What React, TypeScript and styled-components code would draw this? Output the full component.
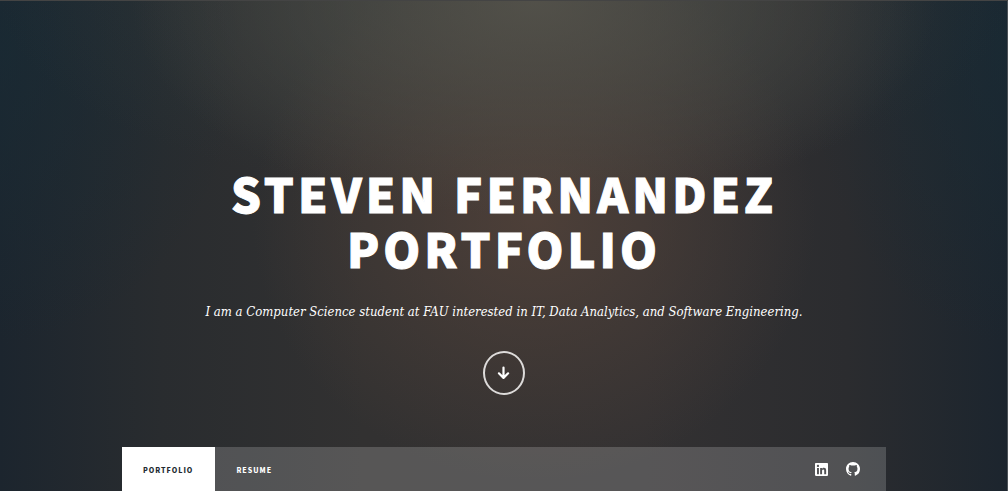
import React from "react";
import styled, { createGlobalStyle } from "styled-components";

const GlobalStyle = createGlobalStyle`
  *, *::before, *::after { box-sizing: border-box; }
  body { margin: 0; background: #1e252d; }
`;

const Page = styled.div`
  min-height: 100vh;
  display: flex;
  flex-direction: column;
  overflow: hidden;
  color: #fff;
  font-family: "Noto Sans CJK JP", "Open Sans", sans-serif;
  border-top: 1px solid #444444;
  box-shadow: inset -1px 0 0 #4c5257;
  background:
    radial-gradient(ellipse 40% 44% at 53% 0%, rgba(86, 84, 76, 0.85), rgba(86, 84, 76, 0) 100%),
    radial-gradient(ellipse 28% 54% at 53% 44%, rgba(84, 67, 58, 0.8), rgba(84, 67, 58, 0) 100%),
    radial-gradient(ellipse 50% 40% at 50% 0%, rgba(52, 62, 62, 0.6), rgba(52, 62, 62, 0) 100%),
    radial-gradient(ellipse 24% 60% at 0% 10%, rgba(24, 44, 54, 0.6), rgba(24, 44, 54, 0) 100%),
    radial-gradient(ellipse 20% 60% at 100% 10%, rgba(24, 44, 54, 0.6), rgba(24, 44, 54, 0) 100%),
    linear-gradient(90deg, #1c252e 0%, #292c2f 16%, #323131 36%, #333132 64%, #2b2c2f 84%, #1c252e 100%);
`;

const Intro = styled.header`
  flex: 1;
  display: flex;
  flex-direction: column;
  align-items: center;
  padding: 164px 24px 52px;
  text-align: center;
`;

const Title = styled.h1`
  margin: 0;
  font-size: 47px;
  line-height: 55px;
  font-weight: 900;
  letter-spacing: 4px;
  text-transform: uppercase;
  -webkit-text-stroke: 1px #fff;
`;

const Tagline = styled.p`
  margin: 23px 0 25px;
  font-family: "DejaVu Serif Condensed", "DejaVu Serif", serif;
  font-style: italic;
  font-size: 13px;
  line-height: 28px;
`;

const ScrollLink = styled.a`
  display: flex;
  align-items: center;
  justify-content: center;
  width: 42px;
  height: 44px;
  border: 2px solid #dddbda;
  border-radius: 50%;
  color: #fff;
`;

const Bar = styled.nav`
  display: flex;
  justify-content: space-between;
  min-height: 44px;
  margin: 0 122px;
  padding-right: 26px;
  background: rgba(255, 255, 255, 0.18);
`;

const Group = styled.div<{ $gap?: number }>`
  display: flex;
  align-items: center;
  gap: ${({ $gap = 0 }) => $gap}px;
`;

const Tab = styled.a<{ $active?: boolean }>`
  display: flex;
  align-items: center;
  align-self: stretch;
  padding: 2px 22px 0 21px;
  font-size: 7px;
  line-height: 12px;
  font-weight: 900;
  letter-spacing: 1px;
  text-transform: uppercase;
  text-decoration: none;
  color: ${({ $active }) => ($active ? "#212931" : "#fff")};
  background: ${({ $active }) => ($active ? "#fff" : "transparent")};
`;

const SocialLink = styled.a`
  display: flex;
  color: #fff;
`;

const ArrowDown = () => (
  <svg width="14" height="14" viewBox="0 0 14 14" fill="none" stroke="currentColor" strokeWidth="2.2" strokeLinecap="round" strokeLinejoin="round" aria-hidden="true">
    <path d="M6.500 1.500V11.800M1.900 7.300 6.500 11.900 11.100 7.300" />
  </svg>
);

const LinkedIn = () => (
  <svg width="13" height="13" viewBox="0 0 448 448" fill="currentColor" aria-hidden="true">
    <path d="M416 0H31.900C14.300 0 0 14.500 0 32.300v383.400C0 433.500 14.300 448 31.900 448H416c17.600 0 32-14.500 32-32.300V32.300C448 14.500 433.600 0 416 0zM135.400 384H69V170.200h66.500V384zM102.200 141c-21.300 0-38.500-17.300-38.500-38.500S80.900 64 102.200 64c21.200 0 38.500 17.300 38.500 38.500S123.500 141 102.200 141zM384.300 384h-66.400V280c0-24.800-.5-56.700-34.500-56.700-34.600 0-39.900 27-39.900 54.900V384h-66.400V170.200h63.700v29.200h.9c8.900-16.800 30.600-34.500 62.900-34.500 67.200 0 79.700 44.300 79.700 101.900V384z" />
  </svg>
);

const GitHub = () => (
  <svg width="14" height="14" viewBox="0 0 16 16" fill="currentColor" aria-hidden="true">
    <path d="M8 0C3.580 0 0 3.580 0 8c0 3.540 2.290 6.530 5.470 7.590.4.070.55-.17.55-.38 0-.19-.01-.82-.01-1.490-2.010.37-2.530-.49-2.690-.94-.09-.23-.48-.94-.82-1.130-.28-.15-.68-.52-.01-.53.63-.01 1.080.58 1.230.82.72 1.210 1.870.87 2.330.66.07-.52.28-.87.51-1.070-1.780-.2-3.640-.89-3.640-3.950 0-.87.31-1.590.82-2.150-.08-.2-.36-1.020.08-2.120 0 0 .67-.21 2.200.82a7.600 7.600 0 0 1 4 0c1.530-1.040 2.200-.82 2.200-.82.44 1.100.16 1.920.08 2.120.51.56.82 1.270.82 2.150 0 3.070-1.870 3.750-3.650 3.950.29.25.54.73.54 1.480 0 1.070-.01 1.930-.01 2.200 0 .21.15.46.55.38A8.010 8.010 0 0 0 16 8c0-4.420-3.580-8-8-8z" />
  </svg>
);

export default function App() {
  return (
    <>
      <GlobalStyle />
      <Page>
        <Intro>
          <Title>
            Steven Fernandez
            <br />
            Portfolio
          </Title>
          <Tagline>
            I am a Computer Science student at FAU interested in IT, Data Analytics, and Software Engineering.
          </Tagline>
          <ScrollLink href="#portfolio" aria-label="Continue">
            <ArrowDown />
          </ScrollLink>
        </Intro>
        <Bar id="portfolio">
          <Group>
            <Tab href="#portfolio" $active>
              Portfolio
            </Tab>
            <Tab href="#resume">Resume</Tab>
          </Group>
          <Group $gap={18}>
            <SocialLink href="#linkedin" aria-label="LinkedIn">
              <LinkedIn />
            </SocialLink>
            <SocialLink href="#github" aria-label="GitHub">
              <GitHub />
            </SocialLink>
          </Group>
        </Bar>
      </Page>
    </>
  );
}
